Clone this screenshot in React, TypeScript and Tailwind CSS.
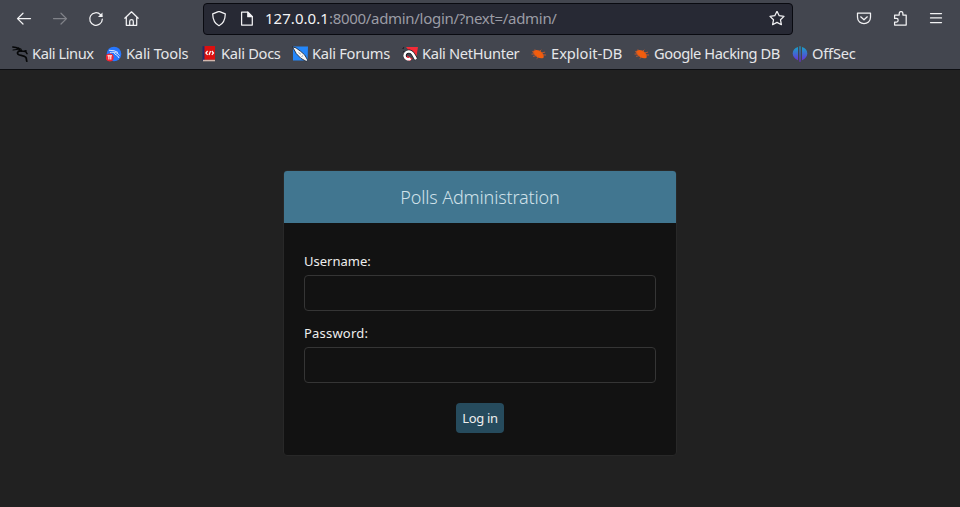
import type { ReactNode } from "react";

function Dragon() {
  return (
    <g fill="none" stroke="#050607" strokeLinecap="round" strokeLinejoin="round">
      <path d="M.8 1 4 1.5 7 3 9.5 5" strokeWidth="1.5" />
      <path d="M1 4 5 3.5 8 4.5M6 1.6 9.5 3.3" strokeWidth="1" />
      <path d="M9 5C6 4.8 4.8 6.8 6 8.2 7.2 9.8 12 8.7 13.8 11.3 14.8 13 14.3 14.2 14.8 15.2" strokeWidth="1.7" />
      <path d="M9 5 13.5 5.4 15 7.6M12.5 5.3 14 4.8" strokeWidth="1.5" />
    </g>
  );
}

const Bug = () => (
  <g transform="translate(-.4 .4)">
    <path d="M3 4.3C5.8 3 9 3.8 11.3 6 13 7.5 13.6 9.8 12.8 11.5 10 12.6 6.5 11.2 4.4 8.8 2.7 7.3 2.2 5.6 3 4.3Z" fill="#f25d0d" />
    <path d="M4 6 1.5 5.2M4.5 7.5 1 7.7M6 9.2 2.5 10M8 10.5 6 12.3M9 5 10.7 3.4M11 6.5 14.5 5.7M12 8.5 15.5 8.6M5 4.5 4.3 3" stroke="#c9592a" strokeWidth=".9" />
  </g>
);

type Bookmark = { label: string; width: string; tracking: string; icon: ReactNode };

const bookmarks: Bookmark[] = [
  { label: "Kali Linux", width: "w-[94px]", tracking: "tracking-[-0.43px]", icon: <Dragon /> },
  {
    label: "Kali Tools",
    width: "w-[95px]",
    tracking: "tracking-[-0.2px]",
    icon: (
      <g>
        <circle cx="8" cy="8" r="7.3" fill="#2777ff" />
        <path d="M3 4.3 8 4.7 12 6.5M4 6.8C8 5.3 12 7 13.5 9.5M8 6.3C8 9 12 8.5 13 12" fill="none" stroke="#d7e5ff" strokeWidth="1" />
        <circle cx="3.7" cy="11.4" r="4" fill="#f32632" />
        <path d="M1.5 9.7H6M2.9 9.7v3.8M4.8 9.7v3.8" stroke="#fff" strokeWidth="1.1" />
      </g>
    ),
  },
  {
    label: "Kali Docs",
    width: "w-[91px]",
    tracking: "tracking-[-0.3px]",
    icon: (
      <g>
        <path d="M1.5 .2H4V15H1.5Z" fill="#252b66" />
        <path d="M3.5 0H14V13.8H3.5Z" fill="#dc1010" />
        <path d="M2 13.8H14v1.5H2Z" fill="#d3b8ae" />
        <path d="M6.6 5 4.9 7l1.7 1.8M10.8 5 12.5 7l-1.7 1.8M9.5 5 8 9" fill="none" stroke="#fff" strokeWidth="1.2" />
      </g>
    ),
  },
  {
    label: "Kali Forums",
    width: "w-[110px]",
    tracking: "tracking-[-0.28px]",
    icon: (
      <g>
        <path d="M1 .5H16L15.6 14.5H1Z" fill="#2487fb" />
        <path d="M.4 .9 4 1.9 8.6 5.3 12.6 8.8 15.6 14 14.5 15.5 9 12.4 4.2 7.5 2.3 4Z" fill="#f7f7f7" stroke="#151c28" strokeWidth=".8" />
        <path d="M6.5 6.6 8.8 8.2M9.5 10.5 11 9.7" stroke="#78818d" strokeWidth=".8" />
      </g>
    ),
  },
  {
    label: "Kali NetHunter",
    width: "w-[129px]",
    tracking: "tracking-[-0.33px]",
    icon: (
      <g>
        <path d="M4 1H16L14.2 12 8 6Z" fill="#f52b37" />
        <path d="M1.5 7 5 9.5 10.5 12.5 8 15 3 13.5Z" fill="#e32334" />
        <path d="M3.2 11.6C1.6 7.6 5.8 4.2 9 6 11.8 7.6 12.2 10.8 14.2 13.2" fill="none" stroke="#171a22" strokeWidth="3.8" />
        <path d="M8.6 12.6C6 14.3 2.8 12.6 2.5 9.8 2.5 6.4 6 4.4 9 6 11.8 7.6 12.2 10.8 14 13.2" fill="none" stroke="#fff" strokeWidth="2.5" />
        <path d="M.8 3 1.8 1.3M2 5.2 1 6.3" stroke="#111318" />
      </g>
    ),
  },
  { label: "Exploit-DB", width: "w-[103px]", tracking: "tracking-[-0.02px]", icon: <Bug /> },
  { label: "Google Hacking DB", width: "w-[158px]", tracking: "tracking-[-0.42px]", icon: <Bug /> },
  {
    label: "OffSec",
    width: "w-[70px]",
    tracking: "tracking-[-0.2px]",
    icon: (
      <g fill="url(#offsec)">
        <path d="M6 1.1C2.5 2 .7 4.5 .7 7.5s1.8 5.1 5.3 6.7Z" />
        <path d="M7.4.2h1.2v15.6H7.4Z" />
        <path d="M10 1.1C13.5 2 15.3 4.5 15.3 7.5s-1.8 5.1-5.3 6.7Z" />
      </g>
    ),
  },
];

function Glyph({ children, className = "" }: { children: ReactNode; className?: string }) {
  return (
    <svg viewBox="0 0 16 16" className={`size-4 shrink-0 ${className}`} fill="none" stroke="#f2f2f4" strokeWidth="1.25" strokeLinecap="round" strokeLinejoin="round">
      {children}
    </svg>
  );
}

function Toolbar() {
  return (
    <nav className="flex h-[37px] items-center">
      <div className="ml-4 flex w-[187px] shrink-0 gap-5">
        <Glyph><path d="M14.5 7.6H1.7M7 2.2 1.5 7.6 7 13" /></Glyph>
        <Glyph className="opacity-35"><path d="M1.5 7.6h12.8M9 2.2l5.5 5.4L9 13" /></Glyph>
        <Glyph><path d="M14.3 8.2a6.3 6.3 0 1 1-1.8-4.6l1.5 1.5" /><path d="M14.5 1.4v4.6H9.9Z" fill="#f2f2f4" stroke="none" /></Glyph>
        <Glyph><path d="M.8 7.2 7.5.8l6.7 6.4M2.3 6.2v8.1h10.4V6.2M5.7 14.2v-3.8c0-2.4 3.6-2.4 3.6 0v3.8" /></Glyph>
      </div>
      <div className="flex h-8 w-[590px] shrink-0 items-center rounded-[4px] border border-[#090a10] bg-[#272934] px-[7px]">
        <Glyph><path d="M8 .3 14.3 2.9C14.2 8.2 12.3 12.5 8 14.7 3.7 12.5 1.8 8.2 1.7 2.9Z" /></Glyph>
        <Glyph className="ml-3"><path d="M2.6 1.1h6.3l4.4 4.5v8.5H2.6Z" /><path d="M8.8 1.1v4.6h4.5Z" fill="#f2f2f4" /></Glyph>
        <span className="ml-[10px] flex-1 whitespace-nowrap text-[15px] tracking-[-0.3px] text-[#9b9ca5]">
          <span className="tracking-[0.04px] text-[#f3f3f5]">127.0.0.1</span>:8000/admin/login/?next=/admin/
        </span>
        <Glyph><path d="m8 .3 2.2 4.4 4.8.7-3.5 3.4.9 4.9L8 11.4l-4.4 2.3.9-4.9L1 5.4l4.8-.7Z" /></Glyph>
      </div>
      <div className="ml-[63px] flex items-center gap-5">
        <Glyph><path d="M1.5 2h13v4.3c0 8.4-13 8.4-13 0ZM4.7 5.8 8 8.8l3.3-3" /></Glyph>
        <Glyph className="translate-x-px"><path d="M1.6 4h4.6V2.6C6.2-.1 9.9-.1 9.9 2.6V4h3.3v10.1H1.6v-3h1.9c2.2 0 2.2-3.7 0-3.7H1.6Z" /></Glyph>
        <Glyph><path d="M2.5 2.5h11M2.5 6.9h11M2.5 11.5h11" /></Glyph>
      </div>
    </nav>
  );
}

function Field({ label, type, tracking }: { label: string; type: string; tracking: string }) {
  return (
    <label className="flex h-[72px] flex-col text-[13px] leading-5 text-[#eee]">
      <span className={`h-6 ${tracking}`}>{label}</span>
      <input type={type} className="h-9 w-full rounded-[4px] border border-[#353535] bg-[#121212] px-2 outline-none" />
    </label>
  );
}

export default function App() {
  return (
    <div className="flex h-[507px] w-[960px] flex-col overflow-hidden bg-[#212121] font-['Noto_Sans',sans-serif]">
      <header className="h-[70px] shrink-0 border-b border-[#0d0e12] bg-[#43464f]">
        <svg className="absolute size-0">
          <defs>
            <linearGradient id="offsec" x1="0" y1="0" x2="0" y2="16" gradientUnits="userSpaceOnUse">
              <stop stopColor="#12a9c7" />
              <stop offset="1" stopColor="#7026dc" />
            </linearGradient>
          </defs>
        </svg>
        <Toolbar />
        <div className="flex h-[34px] items-center pl-3">
          {bookmarks.map((b) => (
            <div key={b.label} className={`flex shrink-0 items-center gap-1 ${b.width}`}>
              <svg viewBox="0 0 16 16" className="size-4 shrink-0">{b.icon}</svg>
              <span className={`whitespace-nowrap pb-0.5 text-[14.67px] leading-5 text-[#e6e6e9] ${b.tracking}`}>{b.label}</span>
            </div>
          ))}
        </div>
      </header>
      <main className="flex flex-1 justify-center pt-[100px]">
        <section className="h-[286px] w-[394px] overflow-hidden rounded-[4px] border border-[#282828] bg-[#121212]">
          <h1 className="flex h-[52px] items-center justify-center bg-[#417690] text-[18px] font-light tracking-[-0.15px] text-[#d0e1e9]">Polls Administration</h1>
          <form className="flex flex-col px-5 pt-7" onSubmit={(e) => e.preventDefault()}>
            <Field label="Username:" type="text" tracking="tracking-normal" />
            <Field label="Password:" type="password" tracking="tracking-[0.2px]" />
            <button className="mt-2 h-[30px] w-12 self-center rounded-[4px] bg-[#264b5d] pt-px text-[13px] tracking-[-0.33px] text-[#eee]">Log in</button>
          </form>
        </section>
      </main>
    </div>
  );
}
